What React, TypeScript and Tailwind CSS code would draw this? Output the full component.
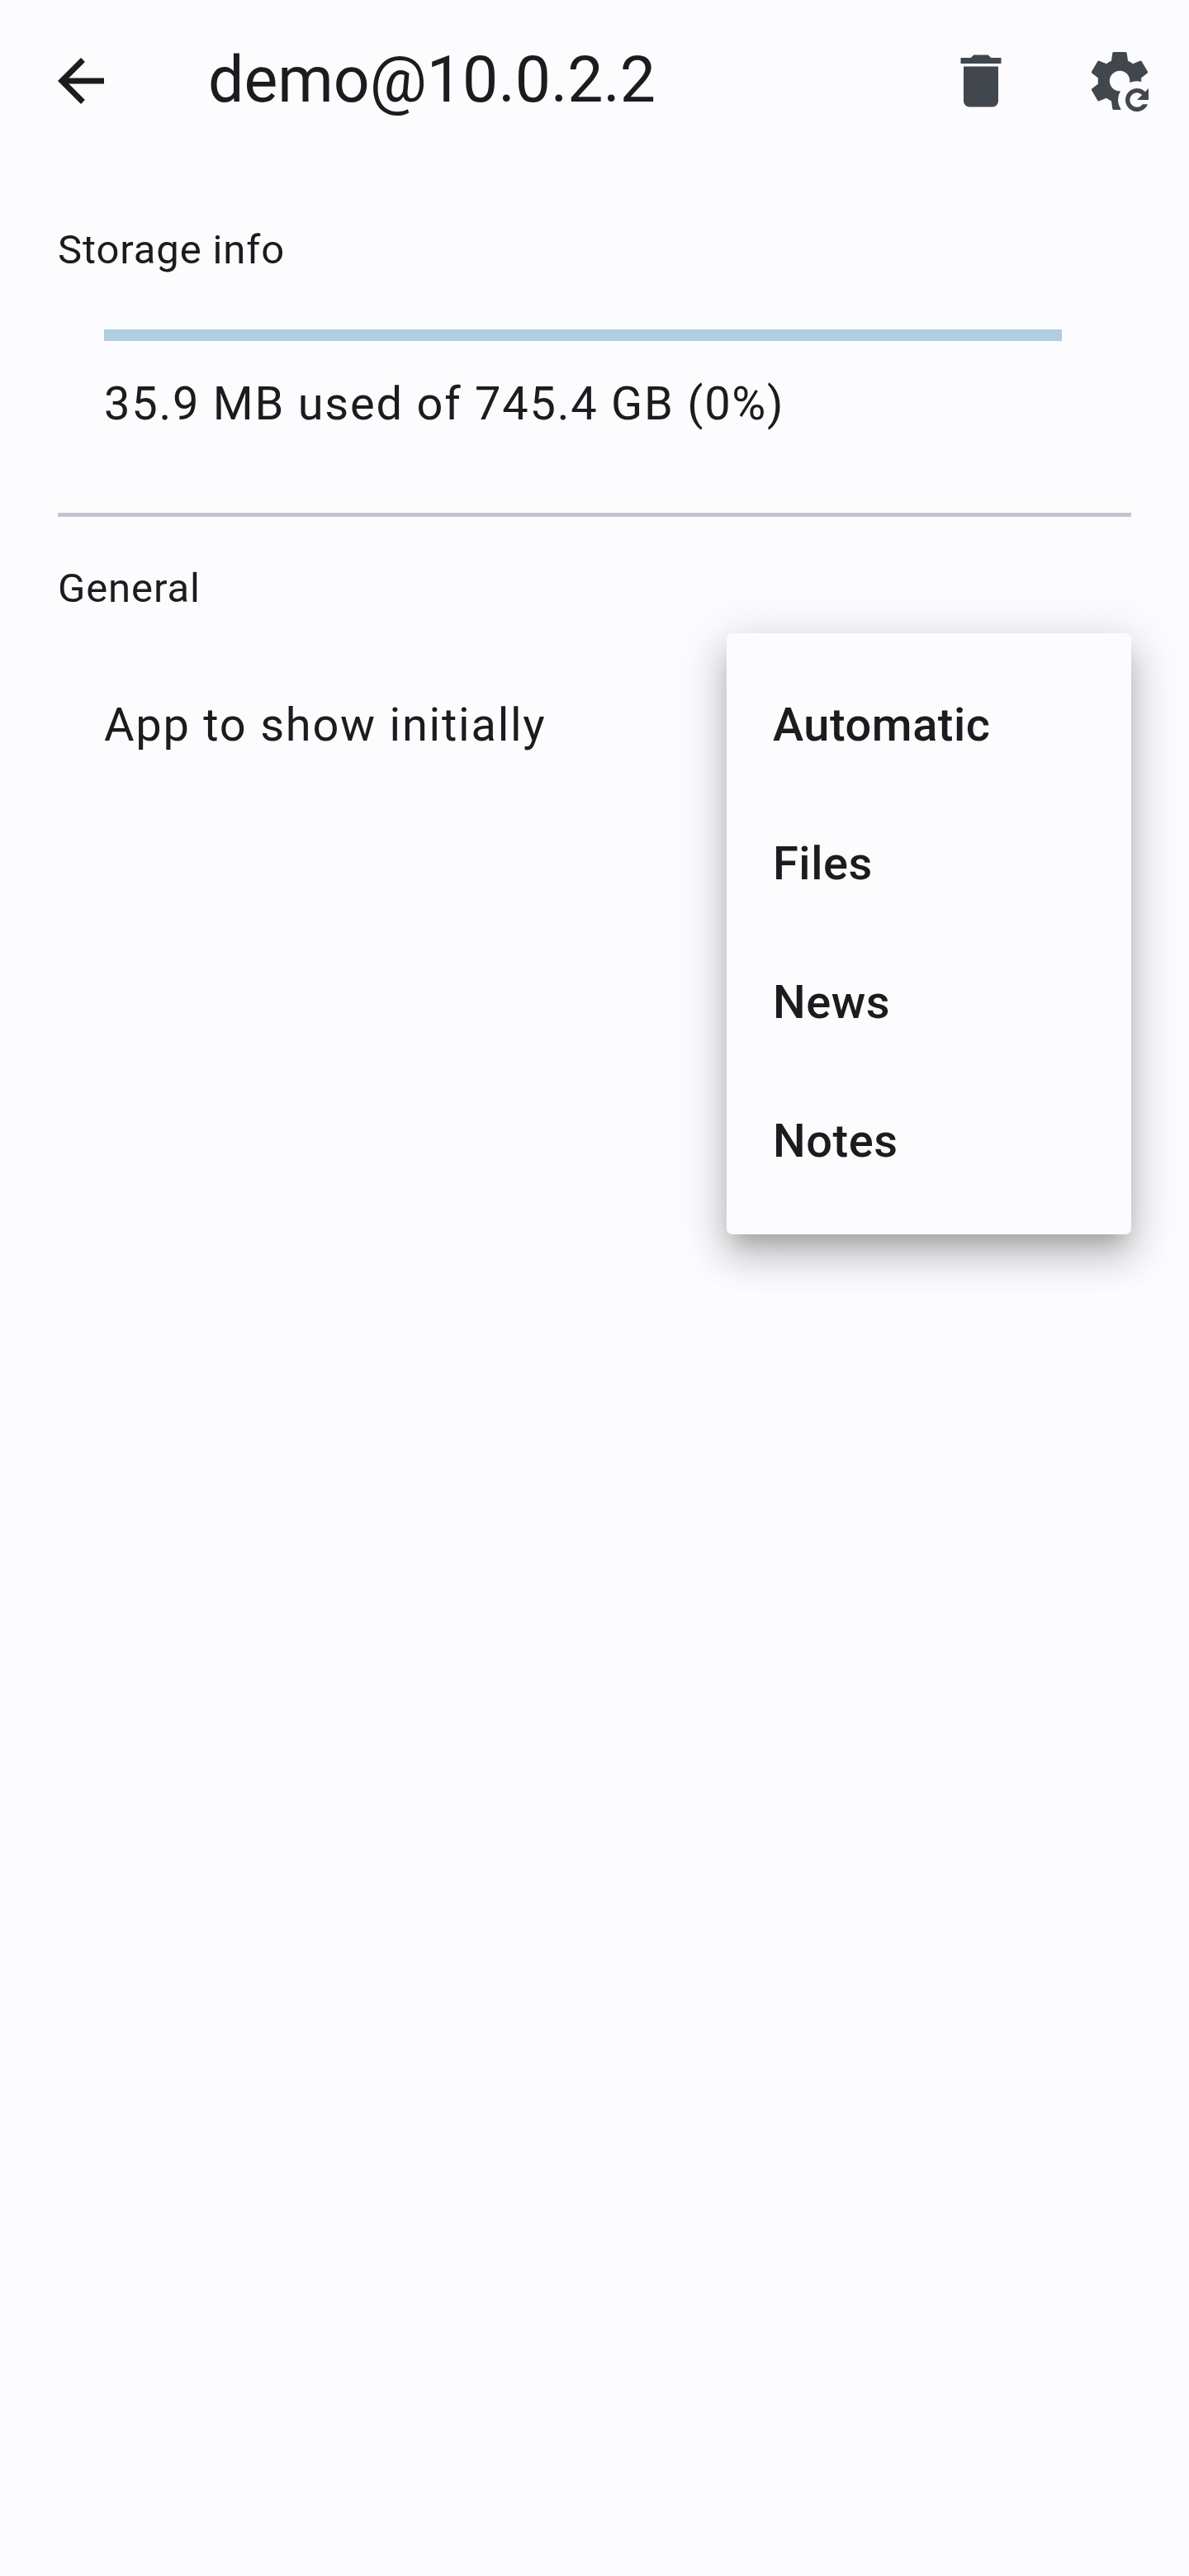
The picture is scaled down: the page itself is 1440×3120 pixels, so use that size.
import React from "react";

const options = ["Automatic", "Files", "News", "Notes"];

function Icon({ children, className = "" }: { children: React.ReactNode; className?: string }) {
  return (
    <svg viewBox="0 0 24 24" fill="currentColor" className={`h-[84px] w-[84px] shrink-0 ${className}`}>
      {children}
    </svg>
  );
}

function AppBar() {
  return (
    <header className="flex h-[196px] items-center pl-14 pr-[42px]">
      <button className="mr-28" aria-label="Back">
        <Icon className="text-[#1a1c1e]">
          <path d="M20 11H7.83l5.59-5.59L12 4l-8 8 8 8 1.41-1.41L7.83 13H20z" />
        </Icon>
      </button>
      <h1 className="flex-1 pb-[2px] text-[77px] leading-[98px]">demo@10.0.2.2</h1>
      <div className="flex gap-[84px] text-[#42474e]">
        <button aria-label="Delete account">
          <Icon>
            <path d="M19 4h-3.5l-1-1h-5l-1 1H5v2h14M6 19a2 2 0 0 0 2 2h8a2 2 0 0 0 2-2V7H6z" />
          </Icon>
        </button>
        <button aria-label="Reset settings">
          <Icon>
            <path d="M12.25 15.49A3.5 3.5 0 1 1 15.46 12.6A6.5 6.5 0 0 1 19.45 12.27L19.5 12C19.5 11.67 19.47 11.34 19.43 11L21.54 9.37C21.73 9.22 21.78 8.95 21.66 8.73L19.66 5.27C19.54 5.05 19.27 4.96 19.05 5.05L16.56 6.05C16.04 5.66 15.5 5.32 14.87 5.07L14.5 2.42C14.46 2.18 14.25 2 14 2H10C9.75 2 9.54 2.18 9.5 2.42L9.13 5.07C8.5 5.32 7.96 5.66 7.44 6.05L4.95 5.05C4.73 4.96 4.46 5.05 4.34 5.27L2.34 8.73C2.21 8.95 2.27 9.22 2.46 9.37L4.57 11C4.53 11.34 4.5 11.67 4.5 12C4.5 12.33 4.53 12.65 4.57 12.97L2.46 14.63C2.27 14.78 2.21 15.05 2.34 15.27L4.34 18.73C4.46 18.95 4.73 19.03 4.95 18.95L7.44 17.94C7.96 18.34 8.5 18.68 9.13 18.93L9.5 21.58C9.54 21.82 9.75 22 10 22H12.5A6.5 6.5 0 0 1 12.25 15.49Z" />
            <path d="M18 14.6C19.11 14.6 20.11 15.05 20.83 15.77L22 14.6V18.6H18L19.77 16.83A2.5 2.5 0 1 0 20 20.1H21.71A4 4 0 1 1 18 14.6Z" />
          </Icon>
        </button>
      </div>
    </header>
  );
}

export default function App() {
  return (
    <div className="h-[3120px] w-[1440px] overflow-hidden bg-[#fcfcff] font-['Roboto',sans-serif] text-[#1a1c1e]">
      <AppBar />
      <main className="px-[70px] pt-[72px]">
        <section>
          <h2 className="text-[49px] leading-[70px] tracking-[0.875px]">Storage info</h2>
          <div className="pl-14 pr-[84px] pt-[61px]">
            <div className="h-[14px] bg-[#b0cee2]" />
            <p className="pt-[34px] text-[56px] leading-[84px] tracking-[1.75px]">35.9 MB used of 745.4 GB (0%)</p>
          </div>
        </section>
        <hr className="mt-[90px] h-[5px] border-0 bg-[#c2c7cf]" />
        <section className="pt-[52px]">
          <h2 className="text-[49px] leading-[70px] tracking-[0.875px]">General</h2>
          <div className="flex items-start justify-between pl-14 pt-[19px]">
            <p className="pt-[69px] text-[56px] leading-[84px] tracking-[1.75px]">App to show initially</p>
            <ul className="h-[728px] w-[490px] rounded-[7px] bg-[#fcfcff] px-14 py-7 shadow-[0_17.5px_23.7px_-10.5px_rgba(0,0,0,0.2),0_28px_43.9px_3.5px_rgba(0,0,0,0.14),0_10.5px_60px_7px_rgba(0,0,0,0.12)]">
              {options.map((name) => (
                <li key={name} className="flex h-[168px] items-center pb-[2px] text-[56px] font-medium leading-[84px] tracking-[0.525px]">
                  {name}
                </li>
              ))}
            </ul>
          </div>
        </section>
      </main>
    </div>
  );
}
